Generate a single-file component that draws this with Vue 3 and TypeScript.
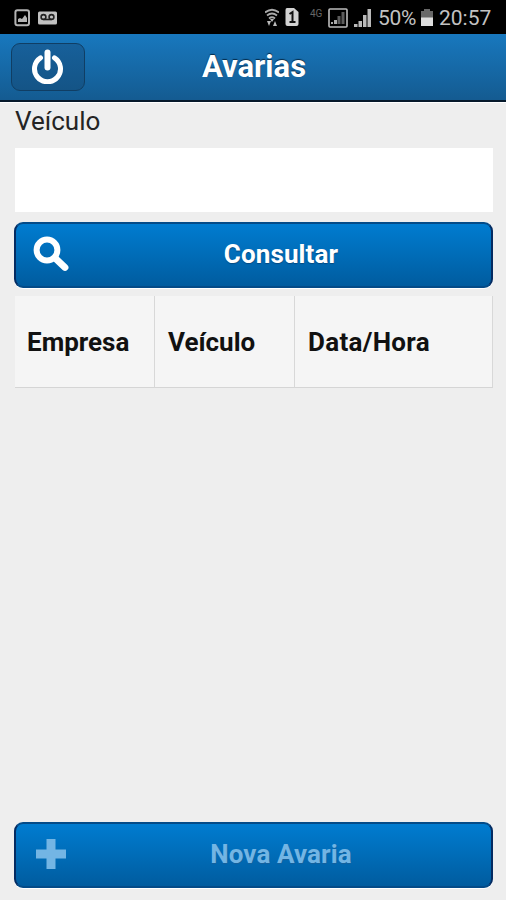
<script setup lang="ts">
import { ref } from 'vue'

const vehicle = ref('')
const columns: string[] = ['Empresa', 'Veículo', 'Data/Hora']
</script>

<template>
  <div class="screen">
    <div class="status">
      <svg class="notifications" width="46" height="18" viewBox="0 0 46 18">
        <rect x="1.4" y="1.2" width="13.6" height="15" rx="2" fill="none" stroke="#b4b4b4" stroke-width="2" />
        <path d="M4 13v-3l2-1 2 1 3-4 2 3v4z" fill="#b4b4b4" />
        <rect x="24" y="2.5" width="19" height="13" rx="1.5" fill="#c1c1c1" />
        <g fill="none" stroke="#222" stroke-width="1.6">
          <circle cx="29.5" cy="8" r="2.4" />
          <circle cx="37.5" cy="8" r="2.4" />
          <path d="M29.5 10.5h8" />
        </g>
      </svg>
      <div class="indicators">
        <svg class="wifi" width="14" height="20" viewBox="0 0 14 20">
          <g fill="none" stroke="#aaa" stroke-width="1.8">
            <path d="M0 4.5Q7-1 14 4.5M2 7.5Q7 3.5 12 7.5M4 10.5Q7 8 10 10.5" />
          </g>
          <path d="M5 11h4l-2 3zM2 13h4l-2 5zM8 18h4l-2-5z" fill="#b9b9b9" />
        </svg>
        <svg class="sim" width="14" height="18" viewBox="0 0 14 18">
          <path d="M2 0h7l4.5 4v12q0 2-2 2h-9Q.5 18 .5 16V2Q.5 0 2 0z" fill="#d2d2d2" />
          <path d="M4.5 6l3-2v10M4.5 14h6" fill="none" stroke="#111" stroke-width="2" />
        </svg>
        <span class="network">4G</span>
        <svg class="signal-box" width="20" height="20" viewBox="0 0 20 20">
          <rect x="1" y="1" width="18" height="18" rx="1" fill="none" stroke="#bcbcbc" stroke-width="1.6" />
          <path d="M3 16v-2h2v2zM6 16v-4h3v4z" fill="#aaa" />
          <path d="M9.5 16V8h3v8zM13.5 16V4h3v12z" fill="#5c5c5c" />
        </svg>
        <svg class="signal" width="18" height="18" viewBox="0 0 18 18">
          <path d="M0 18v-3h3.5v3zM4.5 18v-6H8v6zM9 18V6h3.5v12zM13.5 18V0H17v18z" fill="#bababa" />
        </svg>
        <span class="percent">50%</span>
        <svg class="battery" width="12" height="17" viewBox="0 0 12 17">
          <path d="M0 2h3V0h6v2h3v7H0z" fill="#686868" />
          <path d="M0 8.5h12V17H0z" fill="#dedede" />
        </svg>
        <span class="clock">20:57</span>
      </div>
    </div>

    <header class="header">
      <button class="power" type="button" aria-label="Sair">
        <svg width="34" height="36" viewBox="0 0 34 36">
          <path d="M9.5 9.8A13 13 0 1 0 23.5 9.8" fill="none" stroke="#fff" stroke-width="5" stroke-linecap="round" />
          <path d="M16.5 4.4v15" stroke="#fff" stroke-width="6" stroke-linecap="round" />
        </svg>
      </button>
      <h1>Avarias</h1>
    </header>

    <main class="content">
      <label for="vehicle">Veículo</label>
      <input id="vehicle" v-model="vehicle" type="text" />
      <button class="action" type="button">
        <svg class="icon" width="38" height="38" viewBox="0 0 38 38">
          <circle cx="16" cy="15" r="10.4" fill="none" stroke="#fff" stroke-width="6" />
          <path d="M24 23L34 32.5" stroke="#fff" stroke-width="6.8" stroke-linecap="round" />
        </svg>
        <span>Consultar</span>
      </button>
      <table>
        <thead>
          <tr><th v-for="column in columns" :key="column">{{ column }}</th></tr>
        </thead>
      </table>
      <button class="action new" type="button" disabled>
        <svg class="icon" width="38" height="38" viewBox="0 0 38 38">
          <path d="M15.5 4h9v10.5H35v9H24.5V34h-9V23.5H5v-9h10.5z" fill="#73b5e4" />
        </svg>
        <span>Nova Avaria</span>
      </button>
    </main>
  </div>
</template>

<style>
body { margin: 0; background: #eee; }
</style>

<style scoped>
* { box-sizing: border-box; }
.screen { width: 506px; height: 900px; display: flex; flex-direction: column; background: #eee; font-family: Roboto, "Liberation Sans", sans-serif; overflow: hidden; }
.status { height: 34px; flex: none; display: flex; justify-content: space-between; align-items: flex-start; padding: 8px 14px 0; background: #000; color: #c2c2c2; }
.notifications { margin-top: 1px; }
.indicators { display: flex; align-items: flex-start; }
.wifi { margin-right: 6px; }
.sim { margin-right: 11px; }
.network { width: 15px; margin-right: 3px; font-size: 10px; line-height: 11px; color: #666; }
.signal-box { margin-right: 6px; }
.signal { margin: 1px 6px 0 0; }
.percent { width: 39px; font-size: 21px; line-height: 21px; letter-spacing: -.3px; }
.battery { margin: 1px 6px 0 4px; }
.clock { width: 53px; font-size: 21px; line-height: 21px; white-space: nowrap; }
.header { height: 68px; flex: none; display: grid; grid-template-columns: 74px 1fr 74px; align-items: center; padding: 0 11px 1px; border-bottom: 2px solid #06192b; background: linear-gradient(#1878be, #145b91); box-shadow: 0 1px #fff; }
.power { width: 74px; height: 48px; margin-top: 1px; display: grid; place-items: center; padding: 0 0 2px; border: 1.5px solid #103e64; border-radius: 9px; background: linear-gradient(#17609a, #145486); }
h1 { margin: 0; padding-left: 2px; text-align: center; color: #fff; font-size: 31px; line-height: 36px; font-weight: 700; text-shadow: 0 -1px 1px #062b49; }
.content { flex: 1; display: flex; flex-direction: column; padding: 3px 13px 12px 14px; }
label { height: 43px; padding: 1px 0 0 1px; color: #242424; font-size: 26px; line-height: 30px; }
input { width: 478px; height: 64px; margin: 0 0 0 1px; padding: 10px; border: 0; border-radius: 0; outline: 0; background: #fff; font: 26px Roboto, sans-serif; }
.action { height: 66px; width: 479px; flex: none; margin-top: 10px; padding: 0 2px 2px 15px; display: grid; grid-template-columns: 42px 1fr; align-items: center; border: 2px solid #044b88; border-left-color: #042b61; border-right-color: #042b61; border-radius: 9px; color: #fff; background: linear-gradient(#007cd0, #005c9f); box-shadow: 0 1px #fff; font: 700 26px Roboto, sans-serif; letter-spacing: .12px; text-shadow: 0 1px 1px #064a80; }
.icon { display: block; }
table { width: 478px; height: 92px; margin: 8px 0 0 1px; border-collapse: separate; border-spacing: 0; table-layout: fixed; background: #f5f5f5; }
th { padding: 0 0 0 13px; text-align: left; vertical-align: middle; color: #111; font-size: 26px; line-height: 30px; border-right: 1px solid #d8d8d8; border-bottom: 1px solid #d5d5d5; }
th:nth-child(1) { width: 140px; padding-left: 12px; }
th:nth-child(2) { width: 140px; }
th:nth-child(3) { letter-spacing: .3px; }
.new { margin-top: auto; color: #73b5e4; text-shadow: 0 1px 1px #17609a; }
</style>
